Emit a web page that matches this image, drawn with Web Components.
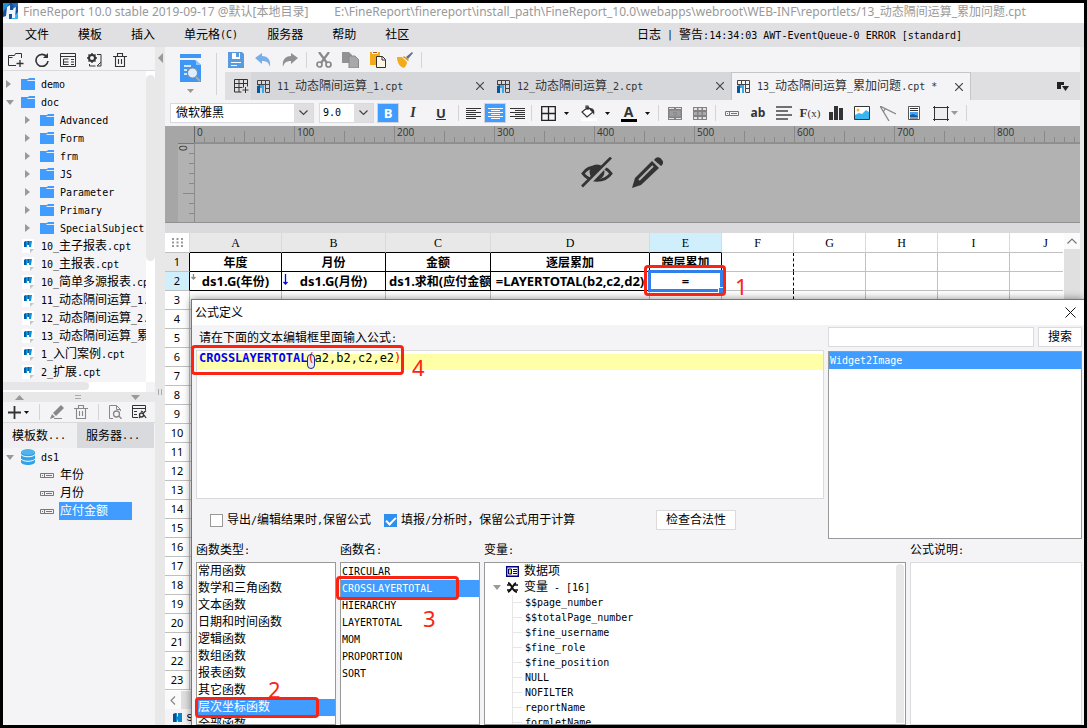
<!DOCTYPE html>
<html lang="zh-CN">
<head>
<meta charset="utf-8">
<title>FineReport 10.0</title>
<style>
html,body{height:100%;margin:0}
body{font:12px/18px "Liberation Sans","Noto Sans CJK SC",sans-serif;color:#000;background:#000}
</style>
</head>
<body>
<fr-app></fr-app>
<script>
const BASE = `
:host,*{box-sizing:border-box}
.l{font-family:"DejaVu Sans Mono",monospace;font-size:10px;white-space:pre}
button,input,select{font:inherit;color:inherit;margin:0;padding:0;border:0;background:none;border-radius:0}
button{display:flex;align-items:center;justify-content:center}
svg{display:block;flex:none}
`;
const esc = s => s.replace(/&/g,'&amp;').replace(/</g,'&lt;');
// ASCII runs take the half-width face, ideographs the full-width one
const mix = (s, cls='l') => esc(s).replace(/[\x20-\x7e]+/g, r => `<span class="${cls}">${r}</span>`);

function define(tag, css, render){
  customElements.define(tag, class extends HTMLElement{
    connectedCallback(){
      if(this.shadowRoot) return;
      const t = document.createElement('template');
      t.innerHTML = `<style>${BASE}${css}</style>${render(this)}`;
      this.attachShadow({mode:'open'}).append(t.content.cloneNode(true));
    }
  });
}

/* name: [width, height, markup] */
const ICONS = {
  logo:[15,16,'<path d="M0 0h15v16H0z" fill="#1b4f9c"/><path d="M0 0h7L0 9z" fill="#1e8fdc"/><path d="M15 0v9L8 16h7z" fill="#35b3ef"/><path d="M0 14l3-1 1-9 3-2v5h3l1-3 2-1-1 12H9v-4H6v5H0z" fill="#eef6fd"/><path d="M9 0h6v3l-4 2z" fill="#1c6fc4"/>'],
  mini:[12,14,'<path d="M0 0h12v14H0z" fill="#fff"/><path d="M2 3l3-1h5l-1 6H7V6H5v2H2z" fill="#0a93d8"/><path d="M2 3l2-1v6H2zM6 2h1v4H6z" fill="#065c9f"/><path d="M12 9v5H8z" fill="#f4f4f7"/><path d="M8 10h4l-4 4z" fill="#c4c4c8"/>'],
  sheet:[9,9,'<path d="M0 1l4-1v4l1-1V0h4v9H5V6L4 9H0z" fill="#0a86ce"/><path d="M0 1l3-1v9H0z" fill="#0a4f92"/>'],
  folder:[14,12,'<path d="M0 1h7l1-1h6v12H0z" fill="#409cff"/><path d="M7 2h7v1H6z" fill="#e3effc"/>'],
  newf:[16,14,'<path d="M8 12.500H.500V2.500h6l1-2h6V5M.5 4.500h4" fill="none" stroke="#333"/><path d="M12 7v7M8.500 10.500h7" stroke="#333" stroke-width="1.3"/>'],
  refresh:[14,14,'<path d="M12 4A6 6 0 1 0 13 8" fill="none" stroke="#333" stroke-width="1.6"/><path d="M13 0v5H8z" fill="#333"/>'],
  panel:[16,14,'<path d="M.5.5h15v13H.5zM.5 3.500h15" fill="none" stroke="#333"/><path d="M3.500 6h5M3.500 6v6M3.500 9h5M3.500 11.500h5M11 6.500h3M11 9h3M11 11.500h3" stroke="#333" fill="none"/>'],
  gear:[15,14,'<circle cx="5" cy="5" r="3" fill="none" stroke="#333" stroke-width="2"/><path d="M5 0v2M5 8v2M0 5h2M8 5h2M1.500 1.500l1 1M7.500 7.500l1 1M8.500 1.500l-1 1M2.500 7.500l-1 1" stroke="#333" stroke-width="1.4"/><path d="M10 1.500h4V8M2.500 11v2h6M14 8v5h-4" fill="none" stroke="#333"/><path d="M14 9l-4 4" stroke="#333"/>'],
  trash:[14,14,'<path d="M0 3.500h14M4.500 3V.500h5V3M2.500 4v9.500h9V4M5.500 6v5M8.500 6v5" fill="none" stroke="currentColor" stroke-width="1.1"/>'],
  preview:[21,28,'<path d="M0 0h21v4H0zM0 6h15l6 5v17H0z" fill="#3e97f5"/><path d="M16 6l5 5h-5z" fill="#8cc4ff"/><path d="M4 12h7M4 16h3M4 20h3" stroke="#fff" stroke-width="1.500"/><circle cx="12.500" cy="19" r="5" fill="#dbeeff" stroke="#888" stroke-width="1"/><path d="M16 23l4 4" stroke="#aaa" stroke-width="2"/>'],
  save:[16,16,'<path d="M0 0h14l2 2v14H0z" fill="#589bdf"/><path d="M4 1h8v6H4z" fill="#fff"/><path d="M8 1h3v4H8z" fill="#589bdf"/><path d="M3 10.500h10M3 13.500h6" stroke="#fff"/>'],
  undo:[16,14,'<path d="M0 5l7-5v3c6 0 9 4 8 11-1-4-3-6-8-6v3z" fill="#79aee8"/>'],
  redo:[16,14,'<path d="M16 5L9 0v3C3 3 0 7 1 14c1-4 3-6 8-6v3z" fill="#909090"/>'],
  cut:[16,16,'<path d="M3 0l8 11M13 0L5 11" stroke="#888" stroke-width="2.200"/><circle cx="3.500" cy="12.500" r="2.500" fill="none" stroke="#888" stroke-width="1.700"/><circle cx="12.500" cy="12.500" r="2.500" fill="none" stroke="#888" stroke-width="1.700"/>'],
  copy:[17,16,'<path d="M0 0h7l3 3v8H0z" fill="#929292"/><path d="M7 4h6l3.500 3.500V16H7z" fill="#a8a8a8" stroke="#888"/>'],
  paste:[16,16,'<path d="M0 0h2v2h6V0h2v13H0z" fill="#f2ab1b"/><path d="M3 0h4v1H3z" fill="#b5532b"/><path d="M6.500 4.500h6l3 3v8h-9z" fill="#fff7e6" stroke="#333"/><path d="M12 4.500V8h3.500" fill="none" stroke="#333"/>'],
  brush:[16,16,'<path d="M15 0l1 1-5 6-2-2z" fill="#5f6f85"/><path d="M7 4l5 4-1 1-5-4z" fill="#d98e20"/><path d="M0 5l5 0 5 5c0 2-1 4-3 6C3 15 0 11 0 5z" fill="#f2ab1b"/>'],
  newtab:[15,14,'<path d="M.5.5h13v7M.5.500V13h7M.5 4.500h13M.5 8.500h8M5 .5V13M9.500.5v8" fill="none" stroke="#333"/><path d="M11.500 8v6M8.500 11h6" stroke="#333"/>'],
  tab:[13,13,'<path d="M.5 5V.500h12v12H9M.5 4.500h12M4.500.5v4M8.500.5v12M8 8.500h4" fill="none" stroke="#444"/><path d="M0 6l3-1v8H0z" fill="#06569c"/><path d="M3 5h4v8H5V8H3z" fill="#36abe6"/>'],
  tabs:[12,9,'<path d="M0 0h7v3H4v4H0zM5 4h7L8.500 9z" fill="#222"/>'],
  x:[8,8,'<path d="M0 0l8 8M8 0L0 8" stroke="#444" stroke-width="1.200"/>'],
  bigx:[11,11,'<path d="M.5.500l10 10M10.500.5l-10 10" stroke="#111"/>'],
  al:[15,11,'<path d="M0 .5h15M0 2.500h10M0 4.500h15M0 6.500h10M0 8.500h15M0 10.500h10" stroke="#333"/>'],
  ac:[15,11,'<path d="M0 .5h15M3 2.500h9M0 4.500h15M3 6.500h9M0 8.500h15M3 10.500h9" stroke="#fff"/>'],
  ar:[15,11,'<path d="M0 .5h15M5 2.500h10M0 4.500h15M5 6.500h10M0 8.500h15M5 10.500h10" stroke="#333"/>'],
  border:[15,15,'<path d="M.7.700h13.600v13.600H.700zM7.500 0v15M0 7.500h15" fill="none" stroke="#222" stroke-width="1.300"/>'],
  fill:[16,16,'<path d="M7 2l5 5-6 5-5-5zM5 5V1h2v4" fill="#fff" stroke="#333" stroke-width="1.200"/><path d="M9 3c4 0 5 3 4 7-1-2-2-4-4-5z" fill="#333"/><path d="M0 13h16v3H0z" fill="#fff"/>'],
  down:[5,3,'<path d="M0 0h5L2.500 3z" fill="#111"/>'],
  downg:[7,4,'<path d="M0 0h7L3.500 4z" fill="#999"/>'],
  merge:[14,13,'<path d="M0 0h14v13H0z" fill="#828282"/><path d="M1.500 3.500h11v6h-11z" fill="#9b9b9b"/><path d="M1 1.500h5M8 1.500h5M1 11.500h5M8 11.500h5" stroke="#e4e4e4"/><path d="M5 5.500h3M5.500 8h3V5.500" stroke="#888" fill="none"/>'],
  unmerge:[14,13,'<path d="M0 0h14v13H0z" fill="#828282"/><path d="M1 2h3M5.500 2h3M10 2h3M1 11h3M5.500 11h3M10 11h3" stroke="#e4e4e4" stroke-width="2"/><path d="M1 6.500h3M5.500 6.500h3M10 6.500h3" stroke="#aaa" stroke-width="3"/>'],
  field:[14,5,'<path d="M.5.500h13v4H.500z" fill="none" stroke="#777"/><path d="M4.500 0v5M6 2.500h6M2 2.500h1" stroke="#777"/>'],
  lines:[16,14,'<path d="M0 1h16M0 5h12M0 9h16M0 13h12" stroke="#444" stroke-width="1.500"/>'],
  chart:[14,14,'<path d="M0 6h4v8H0zM5 0h4v14H5zM10 2h4v12h-4z" fill="#333"/>'],
  image:[16,14,'<path d="M.5.500h15v13H.500z" fill="#fff" stroke="#333"/><circle cx="4" cy="4" r="1.500" fill="#ffb52e"/><path d="M1 9l4-2 3 1 4-4 3 2v7H1z" fill="#37b6f0"/>'],
  slash:[16,15,'<path d="M0 0l16 8M0 0l9 15M5 3c-1 2-1 2-2 3" fill="none" stroke="#888" stroke-width="1.300"/>'],
  doc:[12,14,'<path d="M.5.500h11v13H.500z" fill="#fff" stroke="#555"/><path d="M2 2.500h8M2 4.500h8M2 12h8" stroke="#333"/><path d="M2 6h8v5H2z" fill="#4aa3ee"/><path d="M2 9l3-1 5 2v1H2z" fill="#125ea8"/>'],
  rect:[16,15,'<path d="M2 2h12v11H2z" fill="#eee"/><path d="M0 1.500h16M0 13.500h16M1.500 0v15M14.500 0v15" stroke="#333"/>'],
  caret:[9,6,'<path d="M.5.500l4 4 4-4" fill="none" stroke="#444" stroke-width="1.200"/>'],
  up:[10,6,'<path d="M.5 5.500l4.500-4.500 4.500 4.500" fill="none" stroke="#777" stroke-width="1.200"/>'],
  left:[6,9,'<path d="M5 .5l-4 4 4 4" fill="none" stroke="#888" stroke-width="1.200"/>'],
  plus:[13,13,'<path d="M6.500 0v13M0 6.500h13" stroke="#333" stroke-width="1.800"/>'],
  pen:[14,14,'<path d="M11 0l3 3-8 8-3-3zM2 9l3 3-5 2z" fill="#888"/><path d="M4 13.500h8" stroke="#888"/>'],
  look:[13,14,'<path d="M4 13.500H.500V.500h7l4 4V6M7.500.500v4H11" fill="none" stroke="#888"/><circle cx="7.500" cy="9" r="3" fill="none" stroke="#888" stroke-width="1.300"/><path d="M10 11l2.500 3" stroke="#888" stroke-width="1.300"/>'],
  conf:[15,14,'<path d="M6 12.500H.500V.500h13V5M.5 3.500h13M2 6.500h3M2 9.500h3" fill="none" stroke="#333"/><circle cx="9.500" cy="10" r="2" fill="none" stroke="#333" stroke-width="1.300"/><path d="M7 13l1-1M11 8.500l3-3M12 10l2 3M9 6l2 1" fill="none" stroke="#333" stroke-width="1.300"/>'],
  db:[14,16,'<path d="M0 3v10c0 4 14 4 14 0V3z" fill="#31a2e6"/><ellipse cx="7" cy="3" rx="7" ry="3" fill="#4fb4ee"/><path d="M0 5.500c2 3 12 3 14 0M0 10c2 3 12 3 14 0" fill="none" stroke="#fff"/>'],
  eye:[32,31,'<path d="M2 16.500C8 7.500 24 7.500 30 16.500 24 25.500 8 25.500 2 16.500z" fill="none" stroke="#333" stroke-width="3"/><circle cx="16" cy="15" r="7.500" fill="#333"/><path d="M31 2L4 30" stroke="#b2b2b2" stroke-width="4"/><path d="M30 .5L1 29.500" stroke="#333" stroke-width="2.600"/>'],
  edit:[31,31,'<path d="M20 4l7 7L9 28l-9 3 3-10z" fill="#333"/><path d="M22 3c3-4 6-3 8 0 2 2 1 5-1 6z" fill="#333"/><path d="M21 9L7 23" stroke="#b2b2b2" stroke-width="2"/>'],
  card:[13,11,'<path d="M.7.700h11.600v9.600H.700z" fill="#fff" stroke="#00007c" stroke-width="1.400"/><path d="M2.500 3h3v5h-3z" fill="#e7e000" stroke="#00007c"/><path d="M7 3.500h4M7 5.500h4M7 7.500h4" stroke="#00007c"/>'],
  vars:[13,11,'<path d="M2 1c4 0 4 9 9 9M10 1C7 2 6 8 2 10" fill="none" stroke="#111" stroke-width="2"/><path d="M1 3h4M8 3h4M1 8h4M8 8h4" stroke="#111" stroke-width="1.500"/>'],
  right:[5,8,'<path d="M0 0l5 4-5 4z" fill="#999"/>'],
  open:[8,5,'<path d="M0 0h8L4 5z" fill="#999"/>'],
  pal:[5,10,'<path d="M5 0v10L0 5z" fill="#999"/>'],
  triup:[9,5,'<path d="M0 5h9L4.500 0z" fill="#999"/>'],
  tridn:[9,5,'<path d="M0 0h9L4.500 5z" fill="#999"/>'],
  dots:[11,9,'<path d="M0 1h2M4.500 1h2M9 1h2M0 4.500h2M4.500 4.500h2M9 4.500h2M0 8h2M4.500 8h2M9 8h2" stroke="#999" stroke-width="2"/>']
};
define('fr-icon', `:host{display:inline-flex;flex:none}`, el => {
  const [w,h,m] = ICONS[el.getAttribute('name')];
  return `<svg width="${w}" height="${h}" viewBox="0 0 ${w} ${h}" aria-hidden="true">${m}</svg>`;
});
const ic = n => `<fr-icon name="${n}"></fr-icon>`;
const btn = (n, label, cls='') => `<button class="${cls}" title="${label}" aria-label="${label}">${ic(n)}</button>`;

define('fr-titlebar', `
:host{display:flex;align-items:flex-start;height:20px;background:#fff;color:#999;font:12px/18px "Noto Sans","Noto Sans CJK SC",sans-serif;white-space:pre;overflow:hidden}
span{margin-left:5px}
.path{margin-left:26px}
`, () => `${ic('logo')}<span>FineReport 10.0 stable 2019-09-17 @默认[本地目录]</span><span class="path">E:\\FineReport\\finereport\\install_path\\FineReport_10.0\\webapps\\webroot\\WEB-INF\\reportlets/13_动态隔间运算_累加问题.cpt</span>`);

define('fr-menubar', `
:host{display:flex;align-items:center;height:24px;padding:0 122px 0 22px;background:#e0e0e2}
nav{display:flex;gap:29px}
.log{display:flex;gap:6px;margin-left:auto;white-space:nowrap}
`, () => `<nav>${['文件','模板','插入','单元格(C)','服务器','帮助','社区'].map(t=>`<button>${mix(t)}</button>`).join('')}</nav>
<div class="log"><span>日志</span><span class="l">|</span><span>${mix('警告:14:34:03 AWT-EventQueue-0 ERROR [standard]')}</span></div>`);

define('fr-tree-row', `
:host{display:flex;align-items:center;height:18px;white-space:nowrap}
.t{width:18px;flex:none;display:flex;align-items:center;padding-left:3px}
:host([depth="1"]) .t{margin-left:19px}
.i{width:20px;flex:none;display:flex}
:host([kind="mini"]) .i{padding-left:1px}
.s{min-width:73px;margin-left:-1px;padding-left:1px;background:#409cff;color:#fff}
`, el => `<span class="t">${el.hasAttribute('arrow')?ic(el.getAttribute('arrow')):''}</span><span class="i">${ic(el.getAttribute('kind'))}</span><span class="${el.hasAttribute('selected')?'s':''}">${mix(el.getAttribute('label'))}</span>`);
const row = (label, kind, depth=0, arrow='', extra='') => `<fr-tree-row role="treeitem" label="${label}" kind="${kind}" depth="${depth}" ${arrow?`arrow="${arrow}"`:''} ${extra}></fr-tree-row>`;

define('fr-side', `
:host{display:flex;flex-direction:column;width:152px;flex:none;background:#f4f4f7}
.bar{display:flex;align-items:center;height:24px;border-bottom:1px solid #dadadc;flex:none;color:#333;padding-top:2px}
.bar button{width:26px;height:22px}
.files{display:flex;height:311px;flex:none}
.tree{flex:1;min-width:0;overflow:hidden;padding-top:4px}
.vs{width:9px;background:#fff;flex:none}
.vs i{display:block;height:186px;margin-top:4px;border-radius:5px;background:#e8e8e8}
.hs{height:10px;flex:none;margin-right:9px;background:#fff}
.hs i{display:block;width:86px;height:8px;border-radius:0 5px 5px 0;background:#e6e6e8}
.split{display:flex;align-items:center;justify-content:space-between;height:10px;padding:0 15px 0 12px;background:#e8e8e8;flex:none}
.eq{width:6px;height:4px;border:solid #aaa;border-width:1px 0}
.bar2{height:21px;padding:0 8px 0 5px;justify-content:space-between}
.bar2 button{width:auto;color:#888}
.bar2 .add{gap:3px}
.bar2 i{width:1px;height:16px;background:#d4d4d8}
.tabs{display:grid;grid-template-columns:74px 1fr;height:25px;flex:none;margin-right:1px}
.tabs button{background:#d9dadd;color:#000;justify-content:flex-start;padding-left:9px}
.tabs button:first-child{background:#f0f0f3}
`, () => `
<div class="bar">${btn('newf','新建文件夹')}${btn('refresh','刷新')}${btn('panel','浏览')}${btn('gear','设置')}${btn('trash','删除')}</div>
<div class="files"><div class="tree" role="tree">
${row('demo','folder',0,'right')}${row('doc','folder',0,'open')}
${['Advanced','Form','frm','JS','Parameter','Primary','SpecialSubject'].map(n=>row(n,'folder',1,'right')).join('')}
${['10_主子报表.cpt','10_主报表.cpt','10_简单多源报表.cp','11_动态隔间运算_1.','12_动态隔间运算_2.','13_动态隔间运算_累','1_入门案例.cpt','2_扩展.cpt'].map(n=>row(n,'mini')).join('')}
</div><div class="vs"><i></i></div></div>
<div class="hs"><i></i></div>
<div class="split">${ic('triup')}<span class="eq"></span>${ic('tridn')}</div>
<div class="bar bar2"><button class="add" aria-label="添加">${ic('plus')}${ic('down')}</button><i></i>${btn('pen','编辑')}${btn('trash','删除')}<i></i>${btn('look','预览')}${btn('conf','连接')}</div>
<div class="tabs"><button>${mix('模板数...')}</button><button>${mix('服务器...')}</button></div>
<div role="tree">${row('ds1','db',0,'open')}${row('年份','field',1)}${row('月份','field',1)}${row('应付金额','field',1,'','selected')}</div>`);

define('fr-splitter', `
:host{display:flex;flex-direction:column;align-items:center;width:10px;flex:none;background:#e8e8e8;padding-top:6px}
i{width:4px;height:6px;margin-top:326px;border:solid #aaa;border-width:0 1px}
`, () => `${ic('pal')}<i></i>`);

define('fr-tab', `
:host{display:flex;align-items:center;flex:0 1 240px;height:28px;padding:0 7px 0 6px;background:#d6d7db;color:#333;white-space:nowrap}
:host([active]){background:#f4f4f7;border:solid #c6c6ca;border-width:1px 1px 0;padding-left:5px}
span.n{margin-left:7px;flex:1}
button{width:8px;height:8px}
`, el => `${ic('tab')}<span class="n">${mix(el.getAttribute('label'))}</span>${btn('x','关闭')}`);

define('fr-toolbars', `
:host{display:grid;grid-template-columns:57px 1fr;grid-template-rows:25px 28px 26px;background:#f4f4f7;color:#333}
.big{grid-row:1/3;display:flex;align-items:center}
.big button{flex-direction:column;width:51px;gap:7px;height:40px}
.big i,.sep{width:1px;background:#d4d4d8;flex:none}
.big i{height:42px}
.top,.fmt{display:flex;align-items:center}
.top button{width:27px;height:24px}
.sep{height:16px;margin:0 3px}
.tabs{display:flex;align-items:center;margin-left:3px;background:#dfdfe2}
.tabs .new{width:26px;height:28px;padding-left:6px;flex:none}
.tabs .all{margin-left:auto;margin-right:11px}
.fmt{grid-column:1/3;padding-left:5px}
.sel{display:flex;position:relative;height:20px;border:1px solid #d9dadd;background:#fff;margin-right:5px}
.sel select{appearance:none;width:100%;padding:0 5px;line-height:18px;color:#000}
.sel b{position:absolute;right:0;top:0;bottom:0;width:19px;background:#dfdfe2;display:flex;align-items:center;justify-content:center;pointer-events:none}
.ff{width:144px}.fs{width:55px;margin-right:3px}
.fs select{font:10px/18px "DejaVu Sans Mono",monospace;padding-left:3px}
.fmt button{height:20px;width:26px;flex:none}
.fmt .on{width:22px;background:#409cff;color:#fff;border:1px solid #cfd3da}
.fmt .a{width:22px}
.fmt .s{width:28px}
.fmt .m{width:25px}
.fmt .w{width:40px;gap:8px}
.fmt .z{width:36px;gap:2px}
.txt{font:bold 13px/18px "Open Sans",sans-serif}
.it{font:italic bold 14px/18px "Liberation Serif",serif}
.un{text-decoration:underline}
.A{display:flex;border-bottom:3px solid #000;font:bold 14px/14px "Open Sans",sans-serif;width:16px;justify-content:center}
.ab{font:bold 12px/18px "Open Sans",sans-serif}
.fx{font:bold 13px/18px "Liberation Serif",serif}
.fx small{font-size:11px;font-weight:400}
`, () => `
<div class="big"><button aria-label="预览">${ic('preview')}${ic('downg')}</button><i></i></div>
<div class="top">${btn('save','保存')}${btn('undo','撤销')}${btn('redo','重做')}<span class="sep"></span>${btn('cut','剪切')}${btn('copy','复制')}${btn('paste','粘贴')}${btn('brush','格式刷')}<span class="sep"></span></div>
<div class="tabs">${btn('newtab','新建','new')}<fr-tab label="11_动态隔间运算_1.cpt"></fr-tab><fr-tab label="12_动态隔间运算_2.cpt"></fr-tab><fr-tab active label="13_动态隔间运算_累加问题.cpt *"></fr-tab>${btn('tabs','全部标签','all')}</div>
<div class="fmt">
<label class="sel ff"><select aria-label="字体"><option>微软雅黑</option></select><b>${ic('caret')}</b></label>
<label class="sel fs"><select aria-label="字号"><option>9.0</option></select><b>${ic('caret')}</b></label>
<button class="on txt">B</button><button class="it s">I</button><button class="txt un s">U</button><span class="sep"></span>
${btn('al','左对齐','a')}${btn('ac','居中','on')}${btn('ar','右对齐','a')}<span class="sep"></span>
<button class="w" aria-label="边框">${ic('border')}${ic('down')}</button><button class="w" aria-label="填充">${ic('fill')}${ic('down')}</button><button class="w" aria-label="字色"><span class="A">A</span>${ic('down')}</button><span class="sep"></span>
${btn('merge','合并','m')}${btn('unmerge','拆分','m')}<span class="sep"></span>
${btn('field','数据列')}<button class="ab">ab</button>${btn('lines','富文本')}<button class="fx"><span>F<small>(x)</small></span></button>${btn('chart','图表')}${btn('image','图片')}${btn('slash','斜线')}${btn('doc','子报表')}
<button class="z" aria-label="悬浮元素">${ic('rect')}${ic('downg')}</button><span class="sep"></span>
</div>`);

define('fr-canvas', `
:host{display:grid;grid-template-columns:13px 16px 1fr;grid-template-rows:17px 79px;background:#a6a6a6;border-bottom:1px solid #919191}
.h{grid-column:3;border-left:1px solid #666;border-bottom:1px solid #919191}
.v{grid-column:2;background:#b2b2b2;border-top:1px solid #777}
.c{grid-column:3;background:#b2b2b2;border:solid #8c8c8c;border-width:1px 0 0 1px;display:flex;justify-content:center;gap:19px;padding:13px 32px 0 0}
text{font:10px "Open Sans",sans-serif;fill:#333}
.h svg,.v svg{width:100%;height:100%;overflow:visible}
`, () => `
<div class="h"><svg><defs><pattern id="p" width="100" height="16" patternUnits="userSpaceOnUse"><path d="M49.500 5v11M9.500 11v5M19.500 11v5M29.500 11v5M39.500 11v5M59.500 11v5M69.500 11v5M79.500 11v5M89.500 11v5M99.500 0v16" stroke="#888"/></pattern></defs><rect width="100%" height="16" fill="url(#p)"/>${[0,1,2,3,4,5,6,7,8].map(n=>`<text x="${n*100+2}" y="10">${n*100}</text>`).join('')}</svg></div>
<div class="v"><svg><path d="M11 9.500h5M11 19.500h5M11 29.500h5M11 39.500h5M5 49.500h11M11 59.500h5M11 69.500h5" stroke="#888"/><text transform="translate(9 7) rotate(-90)">0</text></svg></div>
<div class="c">${ic('eye')}${ic('edit')}</div>`);

define('fr-grid', `
:host{display:flex;flex:1;min-height:0;flex-direction:column;background:#fff;border-top:10px solid #dadadc;overflow:hidden}
.w{display:flex;flex:none}
.s{flex:1;min-width:0;overflow:hidden}
table{border-collapse:separate;border-spacing:0;table-layout:fixed;width:917px;font:12px/16px "Noto Sans CJK SC",sans-serif}
td,th{height:19px;padding:0;border:solid #c0c0c0;border-width:0 1px 1px 0;overflow:hidden;text-align:center;white-space:nowrap;font-weight:400}
thead th{height:20px;border-right-color:#dadadc;font:12px/16px "Liberation Serif",serif}
tbody th{font:11px/16px "Noto Sans",sans-serif}
.g{background:#e8e8e8}.b{background:#cfeffc}
.k{border-color:#000;font-weight:700}
tr th.kr{border-right-color:#000}
tr th.kb{border-bottom-color:#000}
.d{border-right:1px dashed #000}
.up{width:16px;flex:none;background:#e0e0e0;margin-left:1px}
.up button{width:16px;height:16px;background:#fafafa}
.f2 .e{font:bold 13px/16px "Noto Sans",sans-serif}
.f2.c2{text-align:left;padding-left:3px}
.k{position:relative}
.k svg{position:absolute;left:1px;top:2px}
.hs{display:flex;height:18px;margin-top:1px;background:#e0e0e0;flex:none}
.hs button{width:16px;background:#fafafa}
.sheet{display:flex;align-items:center;gap:4px;height:17px;padding-left:8px;background:#f4f4f7;font:12px/16px "Liberation Mono",monospace;flex:none}
`, () => {
  const cols = 'ABCDEFGHIJ'.split(''), w = [92,104,105,159,72,72,72,72,72,72];
  const body = {
    1:['年度','月份','金额','逐层累加','跨层累加'],
    2:['ds1.G(年份)','ds1.G(月份)','ds1.求和(应付金额','=LAYERTOTAL(b2,c2,d2)','=']
  };
  let rows = '';
  for(let r=1;r<=23;r++){
    rows += `<tr><th class="${r==1?'g kr':r==2?'b kr':''}">${r}</th>` + cols.map((c,i)=>{
      const t = body[r] && body[r][i];
      if(t===undefined) return `<td class="${i==5?'d':''}"></td>`;
      const mark = r==2 && i<2 ? `<svg width="5" height="12" viewBox="0 0 5 12"><path d="M2.500 0v${i?10:5}M.5 ${i?8:3}l2 2 2-2" fill="none" stroke="${i?'#00f':'#888'}" stroke-width="1.300"/></svg>` : '';
      return `<td class="k ${r==2?'f2 c'+i:''}">${mark}${mix(t,'e')}</td>`;
    }).join('') + '</tr>';
  }
  return `<div class="w"><div class="s"><table><colgroup><col style="width:25px">${w.map(x=>`<col style="width:${x}px">`).join('')}</colgroup>
<thead><tr><th>${ic('dots')}</th>${cols.map((c,i)=>`<th class="${i<4?'g kb':i==4?'b kb':''}">${c}</th>`).join('')}</tr></thead><tbody>${rows}</tbody></table></div>
<div class="up">${btn('up','上移')}</div></div>
<div class="hs">${btn('left','左移')}</div><div class="sheet">${ic('sheet')}<span>s</span></div>`;
});

define('fr-note', `
:host{display:block;position:absolute;border:3px solid #fb2412;border-radius:4px;z-index:5}
span{position:absolute;color:#fb2412;font:22px/24px "Noto Sans",sans-serif}
`, el => `<span style="left:${el.getAttribute('nx')}px;top:${el.getAttribute('ny')}px">${el.getAttribute('n')}</span>`);

define('fr-dialog', `
:host{display:flex;flex-direction:column;background:#f4f4f7;border:solid #777;border-width:1px 0 0 1px;box-shadow:0 0 8px rgba(0,0,0,.45);overflow:hidden}
header{display:flex;align-items:center;justify-content:space-between;height:25px;padding:0 8px 0 3px;background:#fff;flex:none}
header button{width:11px;height:11px}
.top{display:grid;grid-template-columns:1fr 254px;gap:4px;height:216px;padding:2px 2px 2px 4px;flex:none}
.col{display:flex;flex-direction:column;min-width:0}
.col>p{margin:0;height:23px;padding:2px 0 0 3px}
.ed{height:149px;border:1px solid #dadadc;background:#fff;padding-top:3px}
.ed div{height:16px;padding-left:2px;background:#ffffa8;font:12px/9px "DejaVu Sans Mono",monospace;white-space:pre}
.ed b{color:#00f}
.ed i{font-style:normal;color:#f00}
.ed .m{display:inline-block;height:15px;line-height:9px;outline:1px solid #1a2f86;outline-offset:-1px;border-radius:5px;background:#e8e8f4}
.ck{display:flex;align-items:center;flex:1;padding:2px 88px 0 14px}
.ck label{display:flex;align-items:center;white-space:nowrap;gap:4px;margin-right:13px}
.ck input{appearance:none;width:13px;height:13px;border:1px solid #999;background:#fff}
.ck input:checked{background:#2f8fef;border-color:#2f8fef;display:grid;place-items:center}
.ck input:checked::before{content:"";width:4px;height:8px;margin-bottom:2px;border:solid #fff;border-width:0 2px 2px 0;transform:rotate(45deg)}
.btn{border:1px solid #dadadc;background:#fff;height:20px}
.ck .btn{width:80px;margin-left:auto}
.find{display:flex;gap:4px;margin-bottom:4px}
.find input{flex:1;min-width:0;height:20px;border:1px solid #dadadc;background:#fff}
.find .btn{width:44px}
.box{margin:0;padding:0;background:#fff;border:1px solid #999;overflow:hidden;white-space:nowrap;list-style:none}
.r{flex:1}
li{height:17px;line-height:17px;padding-left:1px}
li[aria-selected]{background:#409cff;color:#fff}
.bot{display:grid;grid-template-columns:140px 140px 1fr 172px;grid-template-rows:21px 1fr;column-gap:4px;flex:1;min-height:0;padding:0 2px 0 4px}
.bot p{margin:0}
.vt{display:flex}
.tr{flex:1;padding:0 0 0 8px}
.tr div{height:15px;line-height:15px;display:flex;align-items:center}
.tr .h{height:16px;line-height:16px;padding-left:13px;gap:5px}
.tr .o{padding-left:0}
.tr .v{margin-left:19px;border-left:1px solid #e6e6e6}
.tr .v::before{content:"";width:9px;height:1px;background:#e6e6e6;margin-right:3px}
.sb{width:8px;margin:1px;border-radius:4px 4px 0 0;background:#e8e8e8}
.desc{border:1px solid #dadadc;background:#fff}
`, () => {
  const list = (a, sel) => a.map((t,i)=>`<li role="option" ${i==sel?'aria-selected="true"':''}>${mix(t)}</li>`).join('');
  return `
<header><span>公式定义</span>${btn('bigx','关闭')}</header>
<div class="top">
 <div class="col"><p>${mix('请在下面的文本编辑框里面输入公式:')}</p>
  <div class="ed" role="textbox" aria-label="公式"><div><b>CROSSLAYERTOTAL</b><i class="m">(</i>a2,b2,c2,e2<i>)</i></div></div>
  <div class="ck"><label><input type="checkbox"><span>${mix('导出/编辑结果时,保留公式')}</span></label><label><input type="checkbox" checked><span>${mix('填报/分析时，保留公式用于计算')}</span></label><button class="btn">检查合法性</button></div>
 </div>
 <div class="col"><div class="find"><input type="text" aria-label="搜索"><button class="btn">搜索</button></div>
  <ul class="box r" role="listbox">${list(['Widget2Image'],0)}</ul></div>
</div>
<div class="bot">
 <p>${mix('函数类型:')}</p><p>${mix('函数名:')}</p><p>${mix('变量:')}</p><p>${mix('公式说明:')}</p>
 <ul class="box" role="listbox">${list(['常用函数','数学和三角函数','文本函数','日期和时间函数','逻辑函数','数组函数','报表函数','其它函数','层次坐标函数','全部函数'],8)}</ul>
 <ul class="box" role="listbox">${list(['CIRCULAR','CROSSLAYERTOTAL','HIERARCHY','LAYERTOTAL','MOM','PROPORTION','SORT'],1)}</ul>
 <div class="box vt"><div class="tr" role="tree"><div class="h">${ic('card')}<span>数据项</span></div><div class="h o">${ic('open')}${ic('vars')}<span>${mix('变量 - [16]')}</span></div>
 ${['$$page_number','$$totalPage_number','$fine_username','$fine_role','$fine_position','NULL','NOFILTER','reportName','formletName'].map(t=>`<div class="v">${mix(t)}</div>`).join('')}</div><i class="sb"></i></div>
 <div class="desc"></div>
</div>`;
});

define('fr-app', `
:host{display:flex;flex-direction:column;height:100vh;border:3px solid #000;position:relative;overflow:hidden}
.mid{display:flex;flex:1;min-height:0}
main{display:flex;flex-direction:column;flex:1;min-width:0}
.edge{width:4px;background:#e8e8e8;flex:none}
fr-dialog{position:absolute;left:188px;top:296px;right:0;bottom:0}
.sel{position:absolute;left:645px;top:267px;width:75px;height:22px;border:3px solid #2f80ed;z-index:4}
.sel::after{content:"";position:absolute;right:-4px;bottom:-4px;width:5px;height:5px;background:#2f80ed;border:solid #fff;border-width:1px 0 0 1px}
.n1{left:641px;top:262px;width:82px;height:31px}
.n4{left:188px;top:342px;width:213px;height:30px}
.n2{left:192px;top:694px;width:124px;height:21px}
.n3{left:333px;top:573px;width:123px;height:24px}
`, () => `
<fr-titlebar></fr-titlebar><fr-menubar></fr-menubar>
<div class="mid"><fr-side></fr-side><fr-splitter></fr-splitter><main><fr-toolbars></fr-toolbars><fr-canvas></fr-canvas><fr-grid></fr-grid></main><div class="edge"></div></div>
<div class="sel"></div>
<fr-dialog role="dialog" aria-label="公式定义"></fr-dialog>
<fr-note class="n1" n="1" nx="88" ny="6"></fr-note>
<fr-note class="n4" n="4" nx="218" ny="7"></fr-note>
<fr-note class="n2" n="2" nx="70" ny="-23"></fr-note>
<fr-note class="n3" n="3" nx="84" ny="27"></fr-note>`);
</script>
</body>
</html>
